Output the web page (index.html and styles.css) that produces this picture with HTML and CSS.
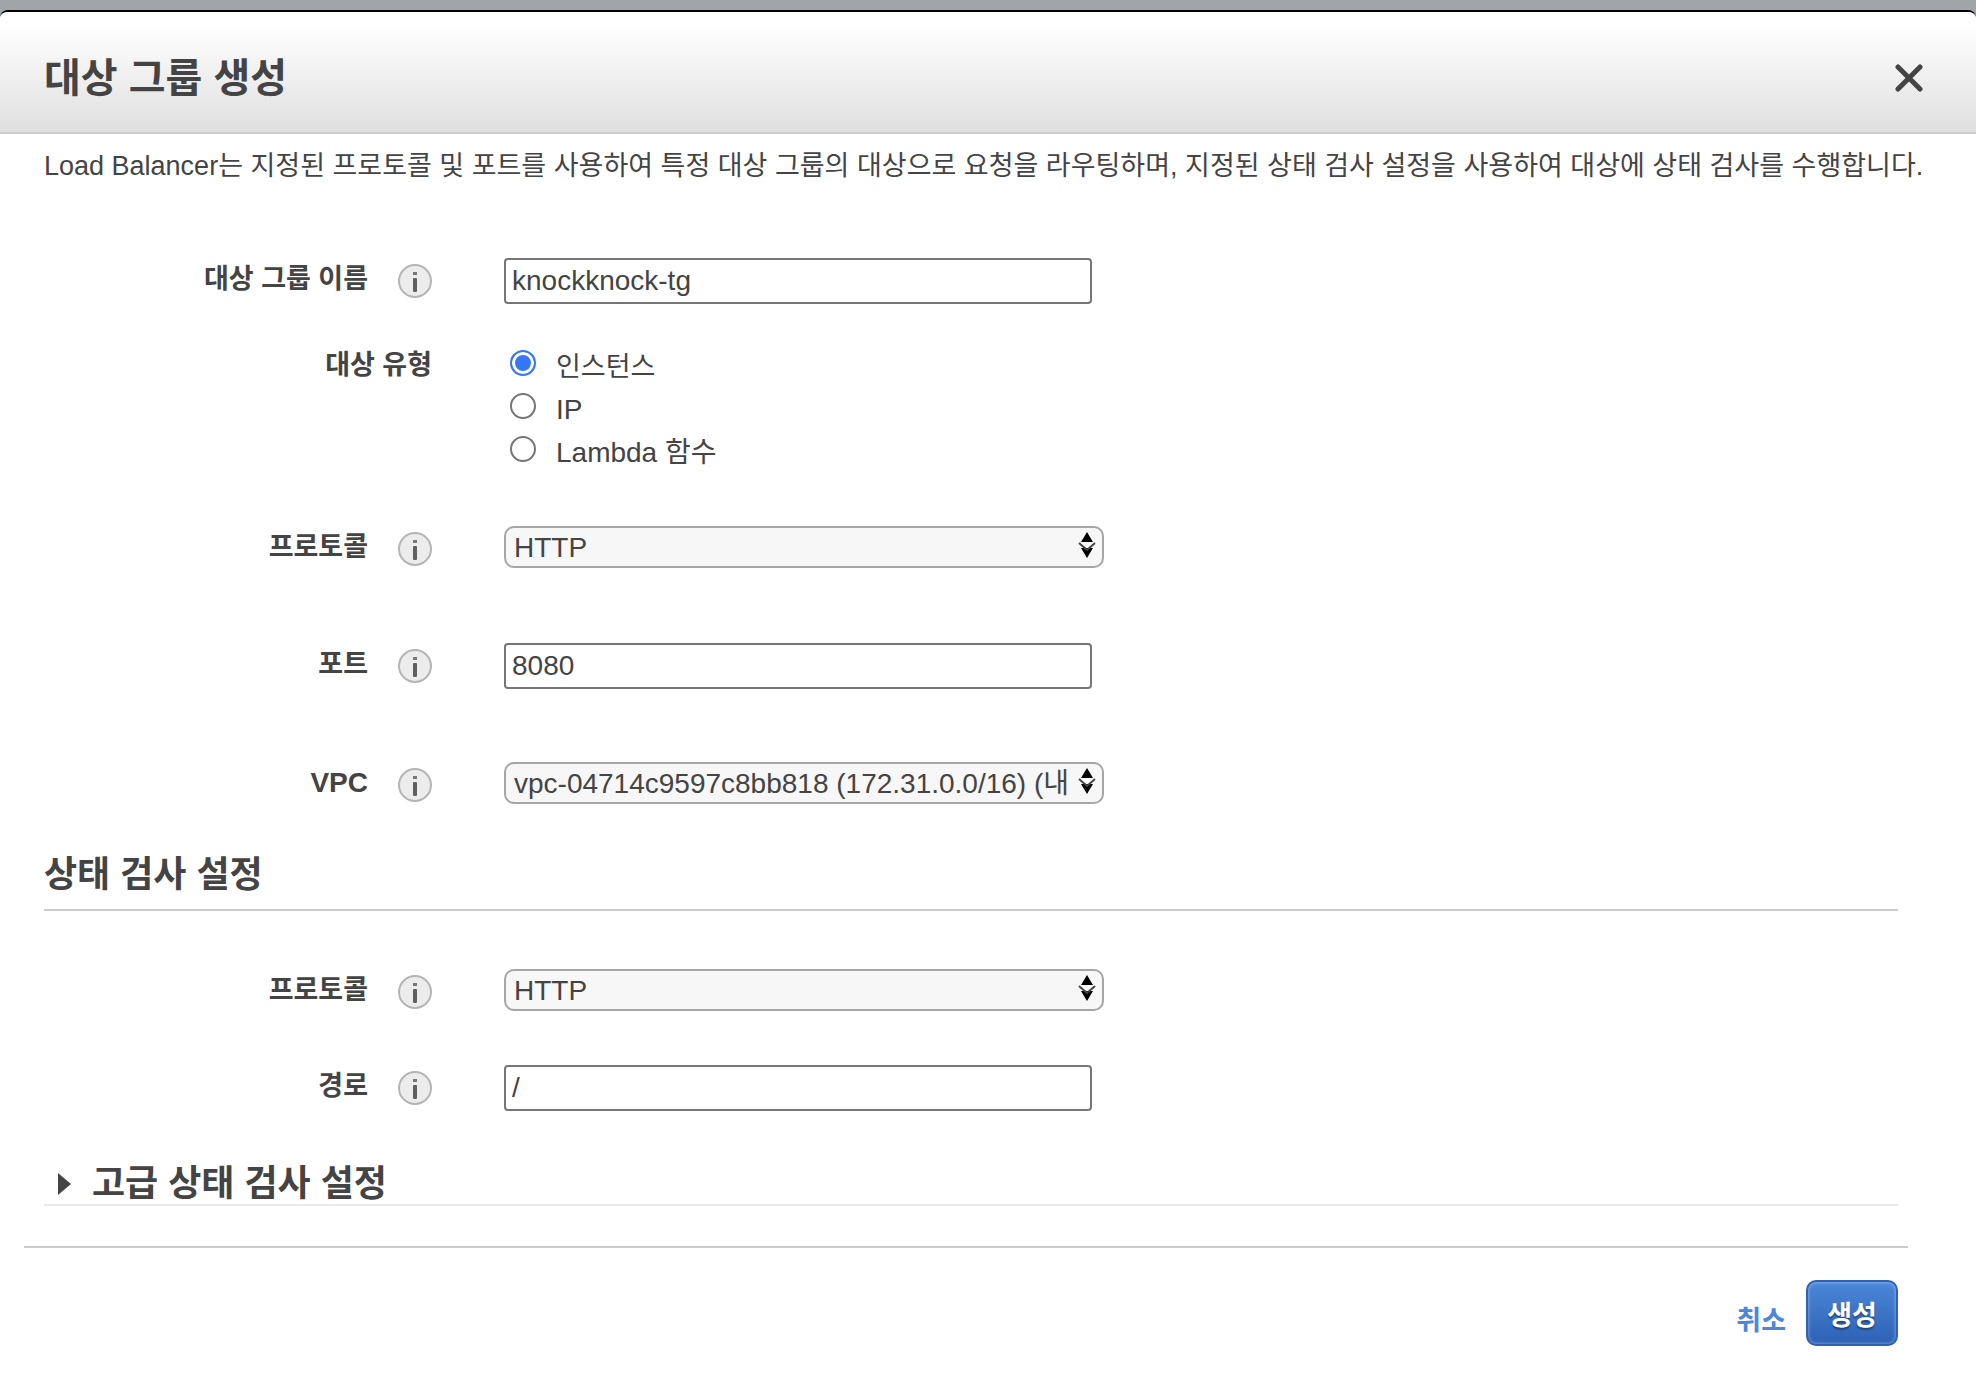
FILE: index.html
```html
<!DOCTYPE html>
<html lang="ko">
<head>
<meta charset="UTF-8">
<meta name="viewport" content="width=device-width, initial-scale=1.0">
<title>대상 그룹 생성</title>
<link rel="stylesheet" href="styles.css">
</head>
<body>

<svg class="sprite" aria-hidden="true">
  <symbol id="info" viewBox="0 0 34 34">
    <circle cx="17" cy="17" r="16" fill="#ececec" stroke="#b5b5b5" stroke-width="2"/>
    <rect x="15" y="8" width="4" height="3" fill="#777"/>
    <rect x="15" y="14" width="4" height="14" rx="1" fill="#606060"/>
  </symbol>
  <symbol id="arrows" viewBox="0 0 18 26">
    <path d="M1 11 L9 19 L17 11 Z" fill="#fff"/>
    <path d="M9 0 L15 10 H3 Z" fill="#000"/>
    <path d="M3 16 H15 L9 26 Z" fill="#000"/>
    <path d="M1 11 L9 18 L17 11" fill="none" stroke="#444" stroke-width="2"/>
  </symbol>
</svg>

<div class="modal" role="dialog" aria-labelledby="title">
  <header class="modal-header">
    <h1 id="title">대상 그룹 생성</h1>
    <button type="button" class="close" aria-label="닫기">
      <svg width="28" height="28" viewBox="0 0 28 28"><path d="M3 3 L25 25 M25 3 L3 25" stroke="#444" stroke-width="5" stroke-linecap="round"/></svg>
    </button>
  </header>

  <form>
    <div class="modal-body">
      <p class="intro">Load Balancer는 지정된 프로토콜 및 포트를 사용하여 특정 대상 그룹의 대상으로 요청을 라우팅하며, 지정된 상태 검사 설정을 사용하여 대상에 상태 검사를 수행합니다.</p>

      <div class="fields">
        <div class="row">
          <div class="row-label"><label for="name">대상 그룹 이름</label><svg class="info"><use href="#info"/></svg></div>
          <input type="text" class="text" id="name" value="knockknock-tg">
        </div>

        <div class="row type-row" role="radiogroup" aria-labelledby="type-label">
          <div class="row-label"><span class="label" id="type-label">대상 유형</span></div>
          <div class="radios">
            <label><input type="radio" name="type" checked><span>인스턴스</span></label>
            <label><input type="radio" name="type"><span class="latin">IP</span></label>
            <label><input type="radio" name="type"><span class="latin">Lambda 함수</span></label>
          </div>
        </div>

        <div class="row protocol-row">
          <div class="row-label"><label for="protocol">프로토콜</label><svg class="info"><use href="#info"/></svg></div>
          <div class="select">
            <select id="protocol"><option>HTTP</option></select>
            <svg class="arrows"><use href="#arrows"/></svg>
          </div>
        </div>

        <div class="row port-row">
          <div class="row-label"><label for="port">포트</label><svg class="info"><use href="#info"/></svg></div>
          <input type="text" class="text" id="port" value="8080">
        </div>

        <div class="row vpc-row">
          <div class="row-label"><label for="vpc" class="latin">VPC</label><svg class="info"><use href="#info"/></svg></div>
          <div class="select">
            <select id="vpc"><option>vpc-04714c9597c8bb818 (172.31.0.0/16) (내</option></select>
            <svg class="arrows"><use href="#arrows"/></svg>
          </div>
        </div>
      </div>

      <h2>상태 검사 설정</h2>

      <div class="fields health">
        <div class="row">
          <div class="row-label"><label for="hc-protocol">프로토콜</label><svg class="info"><use href="#info"/></svg></div>
          <div class="select">
            <select id="hc-protocol"><option>HTTP</option></select>
            <svg class="arrows"><use href="#arrows"/></svg>
          </div>
        </div>

        <div class="row path-row">
          <div class="row-label"><label for="path">경로</label><svg class="info"><use href="#info"/></svg></div>
          <input type="text" class="text" id="path" value="/">
        </div>
      </div>

      <button type="button" class="advanced" aria-expanded="false">
        <svg width="13" height="22" viewBox="0 0 13 22"><path d="M0 0 L13 11 L0 22 Z" fill="#444"/></svg>
        고급 상태 검사 설정
      </button>
    </div>

    <footer class="modal-footer">
      <a href="#" class="cancel">취소</a>
      <button type="submit" class="create">생성</button>
    </footer>
  </form>
</div>

</body>
</html>
```
FILE: styles.css
```css
* {
  box-sizing: border-box;
}
body {
  margin: 0;
  padding-top: 10px;
  background-color: #a0a5a9;
  color: #444;
  font-family: "Liberation Sans", "Noto Sans CJK KR", sans-serif;
  font-size: 27px;
  line-height: 40px;
}
input, select, button {
  font-family: inherit;
  color: inherit;
  margin: 0;
}
.sprite {
  display: none;
}
.modal {
  min-height: calc(100vh - 10px);
  background-color: #fff;
  border-top: 2px solid #000;
  border-radius: 8px 8px 0 0;
  overflow: hidden;
}
.modal-header {
  display: flex;
  justify-content: space-between;
  align-items: center;
  padding: 36px 53px 24px 44px;
  background: linear-gradient(#fff 10%, #dfdfdf);
  border-bottom: 2px solid #ccc;
}
h1 {
  margin: 0;
  font-size: 40px;
  line-height: 60px;
}
.close {
  display: flex;
  padding: 0;
  border: none;
  background: none;
  cursor: pointer;
}
.modal-body {
  padding: 12px 78px 0 44px;
}
.intro {
  margin: 0;
  white-space: nowrap;
}
.latin {
  font-size: 28px;
}
.fields {
  padding-top: 72px;
}
.row {
  display: flex;
  align-items: center;
  gap: 72px;
  min-height: 46px;
}
.row-label {
  display: flex;
  justify-content: flex-end;
  align-items: center;
  gap: 30px;
  width: 388px;
}
.row-label label, .label {
  padding-bottom: 4px;
  font-weight: bold;
}
.info {
  width: 34px;
  height: 34px;
}
.type-row {
  align-items: flex-start;
  margin-top: 41px;
}
.protocol-row {
  margin-top: 52px;
}
.port-row {
  margin-top: 71px;
}
.vpc-row {
  margin-top: 73px;
}
.path-row {
  margin-top: 50px;
}
.text {
  width: 588px;
  height: 46px;
  padding: 0 6px;
  border: 2px solid #767676;
  border-radius: 4px;
  background-color: #fff;
  font-size: 28px;
}
.select {
  position: relative;
  align-self: flex-start;
  width: 600px;
}
.select select {
  display: block;
  appearance: none;
  width: 100%;
  height: 42px;
  padding: 0 30px 0 8px;
  border: 2px solid #a6a6a6;
  border-radius: 10px;
  background-color: #f7f7f7;
  font-size: 28px;
}
.arrows {
  position: absolute;
  top: 6px;
  right: 8px;
  width: 18px;
  height: 26px;
  pointer-events: none;
}
.radios label {
  display: flex;
  gap: 20px;
  height: 43px;
  padding-left: 6px;
}
.radios span {
  padding-top: 2px;
}
.radios input {
  appearance: none;
  width: 26px;
  height: 26px;
  margin-top: 5px;
  border: 2px solid #767676;
  border-radius: 50%;
  background-color: #fff;
}
.radios input:checked {
  border-color: #3478f6;
  background-color: #3478f6;
  box-shadow: inset 0 0 0 3px #fff;
}
h2 {
  margin: 41px 0 0;
  padding-bottom: 8px;
  border-bottom: 2px solid #ccc;
  font-size: 36px;
  line-height: 52px;
}
.health {
  padding-top: 58px;
}
.advanced {
  display: flex;
  align-items: center;
  gap: 21px;
  width: 100%;
  margin-top: 53px;
  padding: 0 0 0 14px;
  border: none;
  border-bottom: 2px solid #eaeaea;
  background: none;
  font-size: 36px;
  font-weight: bold;
  line-height: 40px;
  cursor: pointer;
}
.modal-footer {
  display: flex;
  justify-content: flex-end;
  align-items: center;
  gap: 20px;
  margin: 40px 68px 0 24px;
  padding: 32px 10px 40px 0;
  border-top: 2px solid #ccc;
}
.cancel {
  padding-top: 16px;
  color: #4a86dc;
  font-weight: bold;
  text-decoration: none;
}
.create {
  width: 92px;
  height: 66px;
  padding: 0;
  border: 2px solid #2f62b3;
  border-radius: 10px;
  background: linear-gradient(#4a87d9, #2d61b5);
  box-shadow: inset 0 0 3px 1px rgba(255, 255, 255, 0.3);
  color: #fff;
  font-size: 27px;
  font-weight: bold;
  text-shadow: 0 2px 2px rgba(0, 0, 0, 0.4);
  cursor: pointer;
}
```
